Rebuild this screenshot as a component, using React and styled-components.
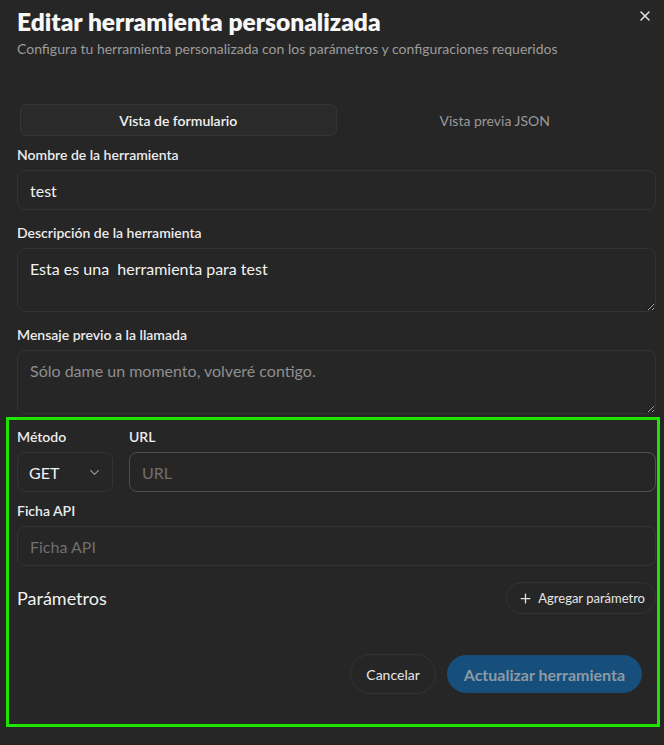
import React from 'react';
import styled, { createGlobalStyle } from 'styled-components';
import { X, ChevronDown, Plus } from 'lucide-react';

const GlobalStyle = createGlobalStyle`
  html, body {
    margin: 0;
    background: #262626;
    color-scheme: dark;
  }
  * {
    box-sizing: border-box;
  }
`;

const Dialog = styled.div`
  position: relative;
  width: 664px;
  height: 745px;
  padding: 6px 8px 0 17px;
  background: #262626;
  font-family: Lato, "Open Sans", sans-serif;
  color: #ededed;
`;

const CloseButton = styled.button`
  position: absolute;
  top: 7px;
  right: 10px;
  width: 18px;
  height: 18px;
  padding: 0;
  border: none;
  background: none;
  color: #e8e8e8;
  display: flex;
  align-items: center;
  justify-content: center;
`;

const Title = styled.h2`
  margin: 0;
  font-size: 24.5px;
  line-height: 32px;
  font-weight: 800;
  color: #f7f7f7;
`;

const Subtitle = styled.p`
  margin: 1px 0 0;
  font-size: 14px;
  line-height: 20px;
  color: #9c9c9c;
`;

const TabList = styled.div`
  display: grid;
  grid-template-columns: 1fr 1fr;
  padding: 3px;
  margin: 42px 0 6px;
`;

const Tab = styled.button`
  height: 32px;
  border-radius: 7px;
  border: 1px solid ${p => (p.active ? '#353535' : 'transparent')};
  background: ${p => (p.active ? '#2a2a2a' : 'transparent')};
  color: ${p => (p.active ? '#f2f2f2' : '#9a9a9a')};
  font-family: inherit;
  font-size: 14px;
  font-weight: ${p => (p.active ? 600 : 400)};
`;

const Field = styled.div`
  display: flex;
  flex-direction: column;
  gap: 5px;
  margin-bottom: ${p => p.gap ?? 13}px;
`;

const Label = styled.label`
  font-size: 14px;
  line-height: 20px;
  font-weight: 600;
  color: #ececec;
`;

const Input = styled.input`
  height: 40px;
  width: 100%;
  padding: 0 12px;
  border: 1px solid #333;
  border-radius: 8px;
  background: #262626;
  color: #f2f2f2;
  font-family: inherit;
  font-size: 16px;
  outline: none;

  &::placeholder {
    color: #6f6f6f;
  }

  &:focus {
    border-color: #4e4e4e;
  }
`;

const TextArea = styled.textarea`
  height: 64px;
  width: 100%;
  padding: 8px 12px;
  border: 1px solid #333;
  border-radius: 8px;
  background: #262626;
  color: #f2f2f2;
  font-family: inherit;
  font-size: 16px;
  line-height: 24px;
  resize: vertical;
  outline: none;

  &::placeholder {
    color: #8e8e8e;
  }
`;

const Highlight = styled.section`
  margin: 3px -4px 0 -11px;
  padding: 7px 1px 30px 8px;
  border: 3px solid #1fe300;
`;

const Row = styled.div`
  display: flex;
  gap: 16px;
  margin-bottom: 9px;
`;

const Select = styled.button`
  width: 96px;
  height: 40px;
  padding: 0 10px 0 11px;
  display: flex;
  align-items: center;
  justify-content: space-between;
  border: 1px solid #333;
  border-radius: 8px;
  background: #262626;
  color: #f2f2f2;
  font-family: inherit;
  font-size: 16px;

  svg {
    opacity: 0.55;
  }
`;

const SectionHeader = styled.div`
  display: flex;
  align-items: center;
  justify-content: space-between;
  margin-top: 16px;
`;

const SectionTitle = styled.h3`
  margin: 0;
  font-size: 18px;
  font-weight: 400;
  color: #f2f2f2;
`;

const GhostButton = styled.button`
  height: 32px;
  padding: 0 10px 0 11px;
  display: flex;
  align-items: center;
  gap: 5px;
  border: 1px solid #333;
  border-radius: 999px;
  background: transparent;
  color: #e6e6e6;
  font-family: inherit;
  font-size: 13px;
`;

const Footer = styled.div`
  display: flex;
  justify-content: flex-end;
  align-items: center;
  gap: 11px;
  margin-top: 40px;
  padding-right: 14px;
`;

const Pill = styled.button`
  height: ${p => (p.primary ? 38 : 40)}px;
  padding: 0 ${p => (p.primary ? 16 : 15)}px;
  border-radius: 999px;
  border: 1px solid ${p => (p.primary ? '#164f7b' : '#333')};
  background: ${p => (p.primary ? '#164f7b' : 'transparent')};
  color: ${p => (p.primary ? '#8d9aa6' : '#e6e6e6')};
  font-family: inherit;
  font-size: ${p => (p.primary ? 16 : 14)}px;
  font-weight: ${p => (p.primary ? 700 : 400)};
`;

export default function App() {
  return (
    <>
      <GlobalStyle />
      <Dialog>
        <CloseButton aria-label="Cerrar">
          <X size={16} strokeWidth={2} />
        </CloseButton>
        <Title>Editar herramienta personalizada</Title>
        <Subtitle>Configura tu herramienta personalizada con los parámetros y configuraciones requeridos</Subtitle>

        <TabList>
          <Tab active>Vista de formulario</Tab>
          <Tab>Vista previa JSON</Tab>
        </TabList>

        <Field>
          <Label>Nombre de la herramienta</Label>
          <Input defaultValue="test" />
        </Field>
        <Field>
          <Label>Descripción de la herramienta</Label>
          <TextArea defaultValue="Esta es una  herramienta para test" />
        </Field>
        <Field gap={0}>
          <Label>Mensaje previo a la llamada</Label>
          <TextArea placeholder="Sólo dame un momento, volveré contigo." />
        </Field>

        <Highlight>
          <Row>
            <Field gap={0}>
              <Label>Método</Label>
              <Select>
                GET
                <ChevronDown size={15} />
              </Select>
            </Field>
            <Field gap={0} style={{ flex: 1 }}>
              <Label>URL</Label>
              <Input placeholder="URL" autoFocus />
            </Field>
          </Row>
          <Field gap={0}>
            <Label>Ficha API</Label>
            <Input placeholder="Ficha API" />
          </Field>

          <SectionHeader>
            <SectionTitle>Parámetros</SectionTitle>
            <GhostButton>
              <Plus size={15} />
              Agregar parámetro
            </GhostButton>
          </SectionHeader>

          <Footer>
            <Pill>Cancelar</Pill>
            <Pill primary>Actualizar herramienta</Pill>
          </Footer>
        </Highlight>
      </Dialog>
    </>
  );
}
